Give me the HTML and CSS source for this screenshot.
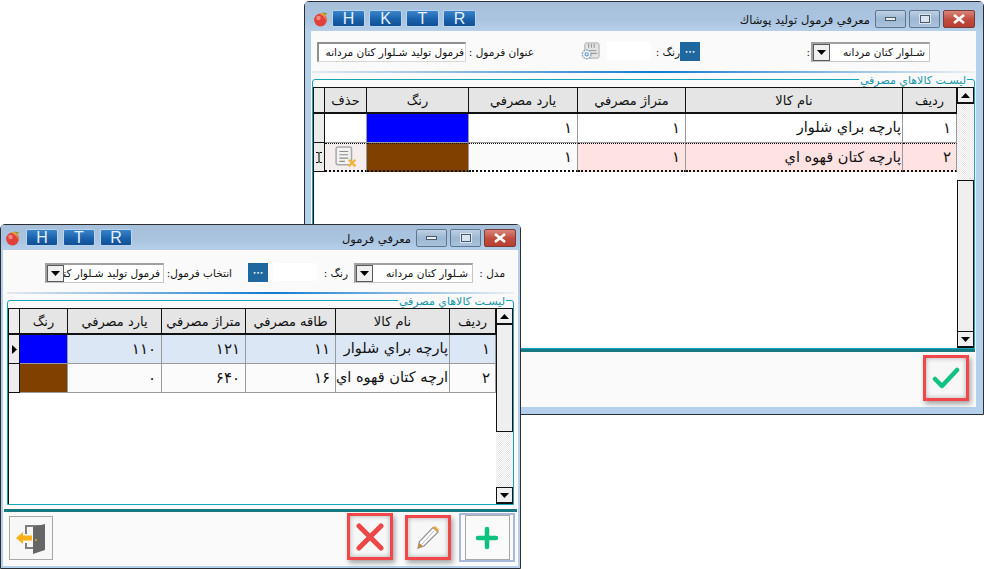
FILE: index.html
```html
<!DOCTYPE html>
<html lang="fa">
<head>
<meta charset="utf-8">
<title>معرفي فرمول</title>
<link rel="stylesheet" href="styles.css">
</head>
<body>
<svg class="defs" width="0" height="0" aria-hidden="true">
  <defs>
    <symbol id="tomato" viewBox="0 0 16 16">
      <circle cx="7.500" cy="9" r="6.400" fill="#e2403a"/>
      <circle cx="5.500" cy="7" r="2.200" fill="#f08a80"/>
      <path d="M6 2.600 C9 1 13 1.400 15 3.600 C13 4.400 11.500 4.400 10.500 4 C13 6 14 8 13.600 10 C12.500 7 10 4.600 6 2.600Z" fill="#e9a13b"/>
      <path d="M9 1.500 L14 2.200 L12 3.400Z" fill="#5d9c45"/>
    </symbol>
    <symbol id="arrow-down" viewBox="0 0 9 5"><path d="M0 0H9L4.500 5Z" fill="#000"/></symbol>
    <symbol id="arrow-up" viewBox="0 0 9 5"><path d="M0 5H9L4.500 0Z" fill="#000"/></symbol>
  </defs>
</svg>

<section class="win win-a">
  <header class="titlebar">
    <svg class="tomato"><use href="#tomato"/></svg>
    <div class="hk"><button class="hk-btn">H</button><button class="hk-btn">K</button><button class="hk-btn">T</button><button class="hk-btn">R</button></div>
    <div class="title">معرفي فرمول توليد پوشاك</div>
    <div class="ctl">
      <span class="cb cb-min"><i></i></span>
      <span class="cb cb-max"><i></i></span>
      <span class="cb cb-close"><svg width="14" height="10" viewBox="0 0 14 10"><path d="M2 1L12 9M12 1L2 9" stroke="#fff" stroke-width="2.600"/></svg></span>
    </div>
  </header>
  <div class="client">
    <div class="form form-a">
      <div class="text-box box-title">فرمول توليد شـلوار كتان مردانه</div>
      <span class="lbl lbl-title">عنوان فرمول :</span>
      <svg class="gear" viewBox="0 0 20 20">
        <rect x="4" y="1" width="15" height="16" rx="2" fill="#e4e4e4" stroke="#a8a8a8"/>
        <path d="M8 2v4M11 2v4M14 2v4M7 9h9M10 12h7" stroke="#9a9a9a" stroke-width="1.200"/>
        <circle cx="6" cy="13" r="4.600" fill="#f4f7fa" stroke="#8fa4b8" stroke-width="1.400" stroke-dasharray="2 .9"/>
        <circle cx="6" cy="13" r="1.700" fill="none" stroke="#5f97c6" stroke-width="1.200"/>
      </svg>
      <div class="blank"></div>
      <span class="lbl lbl-color">رنگ :</span>
      <button class="dots">•••</button>
      <span class="lbl lbl-colon">:</span>
      <div class="combo combo-a"><span class="arrow"><svg width="9" height="5"><use href="#arrow-down"/></svg></span><span class="combo-text">شـلوار كتان مردانه</span></div>
    </div>
    <div class="sep"></div>
    <fieldset class="group group-a">
      <legend>ليسـت كالاهاي مصرفي</legend>
      <div class="grid-wrap">
        <div class="grid cols-a">
          <div class="hd hd-rh"></div><div class="hd">حذف</div><div class="hd">رنگ</div><div class="hd">يارد مصرفي</div><div class="hd">متراژ مصرفي</div><div class="hd">نام كالا</div><div class="hd">رديف</div>
          <div class="rh"></div><div class="c"></div><div class="c blue"></div><div class="c num">۱</div><div class="c num">۱</div><div class="c name">پارچه براي شلوار</div><div class="c num">۱</div>
          <div class="rh sel"><svg width="6" height="11" viewBox="0 0 6 11"><path d="M0 .5h2.200l.8.8.8-.8H6M3 1v9M0 10.500h2.200l.8-.8.8.8H6" stroke="#000" fill="none"/></svg></div>
          <div class="c act del"><svg class="del-ico" viewBox="0 0 20 20"><rect x="1" y="1" width="14" height="16" rx="1.500" fill="#f3f3f3" stroke="#a9a9a9" stroke-width="1.400"/><path d="M4 5h8M4 8h8M4 11h8M4 14h5" stroke="#8d8d8d"/><path d="M12.500 12.500l6 6M18.500 12.500l-6 6" stroke="#f5b335" stroke-width="2"/></svg></div>
          <div class="c act brown"></div><div class="c act white num">۱</div><div class="c act pink num">۱</div><div class="c act pink name">پارچه كتان قهوه اي</div><div class="c act pink num">۲</div>
        </div>
        <div class="sbar sbar-a">
          <span class="sb-arrow"><svg width="9" height="5"><use href="#arrow-up"/></svg></span>
          <span class="sb-track"></span>
          <span class="sb-thumb"></span>
          <span class="sb-arrow"><svg width="9" height="5"><use href="#arrow-down"/></svg></span>
        </div>
      </div>
    </fieldset>
    <div class="teal"></div>
    <footer class="foot foot-a">
      <button class="act-btn red btn-ok"><svg width="28" height="24" viewBox="0 0 28 24"><path d="M3 13l7 7L25 4" fill="none" stroke="#12c281" stroke-width="4.500" stroke-linecap="round" stroke-linejoin="round"/></svg></button>
    </footer>
  </div>
</section>

<section class="win win-b">
  <header class="titlebar">
    <svg class="tomato"><use href="#tomato"/></svg>
    <div class="hk"><button class="hk-btn">H</button><button class="hk-btn">T</button><button class="hk-btn">R</button></div>
    <div class="title">معرفي فرمول</div>
    <div class="ctl">
      <span class="cb cb-min"><i></i></span>
      <span class="cb cb-max"><i></i></span>
      <span class="cb cb-close"><svg width="14" height="10" viewBox="0 0 14 10"><path d="M2 1L12 9M12 1L2 9" stroke="#fff" stroke-width="2.600"/></svg></span>
    </div>
  </header>
  <div class="client">
    <div class="form form-b">
      <div class="combo combo-b"><span class="arrow"><svg width="9" height="5"><use href="#arrow-down"/></svg></span><span class="combo-text clip">فرمول توليد شـلوار كتان مردانه</span></div>
      <span class="lbl lbl-pick">انتخاب فرمول:</span>
      <button class="dots">•••</button>
      <div class="blank"></div>
      <span class="lbl lbl-color-b">رنگ :</span>
      <div class="combo combo-c"><span class="arrow"><svg width="9" height="5"><use href="#arrow-down"/></svg></span><span class="combo-text">شـلوار كتان مردانه</span></div>
      <span class="lbl lbl-model">مدل :</span>
    </div>
    <div class="sep"></div>
    <fieldset class="group group-b">
      <legend>ليسـت كالاهاي مصرفي</legend>
      <div class="grid-wrap">
        <div class="grid cols-b">
          <div class="hd hd-rh"></div><div class="hd">رنگ</div><div class="hd">يارد مصرفي</div><div class="hd">متراژ مصرفي</div><div class="hd">طاقه مصرفي</div><div class="hd">نام كالا</div><div class="hd">رديف</div>
          <div class="rh"><svg width="5" height="9" viewBox="0 0 5 9"><path d="M0 0V9L5 4.500Z" fill="#000"/></svg></div><div class="c blue"></div><div class="c lb num">۱۱۰</div><div class="c lb num">۱۲۱</div><div class="c lb num">۱۱</div><div class="c lb name">پارچه براي شلوار</div><div class="c lb num">۱</div>
          <div class="rh"></div><div class="c brown"></div><div class="c off num">۰</div><div class="c off num">۶۴۰</div><div class="c off num">۱۶</div><div class="c off name">ارچه كتان قهوه اي</div><div class="c off num">۲</div>
        </div>
        <div class="sbar sbar-b">
          <span class="sb-arrow"><svg width="9" height="5"><use href="#arrow-up"/></svg></span>
          <span class="sb-thumb"></span>
          <span class="sb-track"></span>
          <span class="sb-arrow"><svg width="9" height="5"><use href="#arrow-down"/></svg></span>
        </div>
      </div>
    </fieldset>
    <div class="teal"></div>
    <footer class="foot foot-b">
      <button class="act-btn exit">
        <svg width="32" height="34" viewBox="0 0 32 34"><path d="M11 13V5H26V27H11V22" fill="none" stroke="#7d7d7d" stroke-width="2"/><path d="M18 6L30 3V29L18 33Z" fill="#666"/><circle cx="21" cy="19" r="1" fill="#f5a623"/><path d="M1 17l7-6v3.500h9v5H8V23Z" fill="#fbb117"/></svg>
      </button>
      <span class="spacer"></span>
      <button class="act-btn red btn-del"><svg width="28" height="28" viewBox="0 0 28 28"><path d="M3 3L25 25M25 3L3 25" stroke="#ee4747" stroke-width="5" stroke-linecap="round"/></svg></button>
      <button class="act-btn red btn-edit"><svg width="24" height="26" viewBox="0 0 24 26"><path d="M17 2.500L22 7 8 21l-6 2 1.500-6.500Z" fill="#fff" stroke="#8f8f8f" stroke-width="1.200"/><path d="M6 19L18 6" stroke="#b5b5b5"/><path d="M17 2.500l2-1.500 4 4-1 2Z" fill="#f0a428"/><path d="M2 23l1.500-5 3.500 3Z" fill="#c98a2c"/></svg></button>
      <button class="add-btn"><span class="add-inner"><svg width="24" height="24" viewBox="0 0 24 24"><path d="M12 3V21M3 12H21" stroke="#0dc27f" stroke-width="4.500" stroke-linecap="round"/></svg></span></button>
    </footer>
  </div>
</section>
</body>
</html>
```

FILE: styles.css
```css
* { box-sizing: border-box; }
html, body { margin: 0; padding: 0; }
body {
  width: 984px;
  height: 569px;
  overflow: hidden;
  position: relative;
  background: #fff;
  font-family: "DejaVu Sans", "Noto Sans", sans-serif;
  color: #111;
}
.defs { position: absolute; }
button { font-family: inherit; padding: 0; margin: 0; }

.win {
  position: absolute;
  display: flex;
  flex-direction: column;
  background: #b4d0ec;
  border: 1px solid #2b2f33;
  border-radius: 5px 5px 0 0;
}
.win-a { left: 304px; top: 1px; width: 680px; height: 414px; }
.win-b { left: 0; top: 224px; width: 521px; height: 345px; }

.titlebar {
  height: 29px;
  flex: none;
  display: flex;
  align-items: flex-start;
  background: linear-gradient(180deg, #a7bfd9 0%, #aac4e0 60%, #b6d0ea 100%);
  padding: 8px 8px 0 8px;
}
.win-b .titlebar { height: 25px; padding: 4px 4px 0 4px; }
.tomato { width: 16px; height: 16px; margin-top: 1px; flex: none; }
.hk { display: flex; gap: 4px; margin-left: 3px; }
.win-b .hk { margin-left: 5px; gap: 5px; }
.hk-btn {
  width: 33px;
  height: 17px;
  border: 1px solid #b9d4ee;
  border-radius: 2px;
  background: linear-gradient(180deg, #3b83c8 0%, #1a62ad 55%, #124f92 100%);
  color: #e8f2fc;
  font: 16px/15px "Liberation Sans", sans-serif;
}
.win-b .hk-btn { width: 32px; }
.title { margin: 1px 0 0 auto; font-size: 11.500px; line-height: 19px; color: #111; direction: rtl; }
.ctl { display: flex; gap: 3px; margin-left: 5px; }
.cb {
  width: 31px;
  height: 18px;
  display: flex;
  align-items: center;
  justify-content: center;
  border: 1px solid #5e7690;
  border-radius: 2px;
  background: linear-gradient(180deg, #bdd0e4 0%, #9db7d2 50%, #a9c3dc 100%);
}
.cb-close { background: linear-gradient(180deg, #d9857a 0%, #c14b3e 55%, #b93e32 100%); border-color: #7a3a36; width: 32px; }
.cb-min i { width: 11px; height: 4px; background: #e9eef3; border: 1px solid #48596b; }
.cb-max i { width: 10px; height: 8px; background: #dbe5ef; border: 1px solid #48596b; outline: 1px solid #dbe5ef; }

.client {
  flex: 1;
  display: flex;
  flex-direction: column;
  background: #fafafa;
  margin: 0 7px 7px 6px;
  min-height: 0;
}
.win-b .client { margin: 0 2px 2px 2px; }

.form {
  height: 40px;
  flex: none;
  display: flex;
  align-items: flex-start;
  padding-top: 11px;
  line-height: 20px;
}
.form-b { height: 42px; padding-top: 13px; }
.lbl { direction: rtl; white-space: nowrap; font-size: 10.500px; }
.text-box {
  direction: rtl;
  background: #fff;
  border: 1px solid #d8d8d8;
  border-top: 2px solid #8f8f8f;
  border-left: 2px solid #8f8f8f;
  height: 20px;
  font-size: 10.500px;
  line-height: 16px;
  padding-right: 1px;
  white-space: nowrap;
  overflow: hidden;
}
.box-title { width: 149px; margin-left: 6px; }
.lbl-title { margin-left: 4px; width: 64px; }
.gear { width: 19px; height: 19px; margin-left: 47px; flex: none; }
.blank { width: 44px; height: 18px; background: #fff; flex: none; margin-left: 7px; }
.lbl-color { margin-left: 3px; width: 26px; }
.dots {
  width: 20px;
  height: 19px;
  border: none;
  background: #1f679f;
  color: #fff;
  font-size: 6px;
  line-height: 19px;
  flex: none;
}
.lbl-colon { margin-left: 107px; width: 3px; }
.combo {
  display: flex;
  height: 20px;
  width: 119px;
  background: #fff;
  border: 1px solid #c6c6c6;
  border-top: 2px solid #a0a0a0;
  border-left: 2px solid #a0a0a0;
  flex: none;
}
.combo-a { margin-left: 1px; }
.arrow {
  width: 17px;
  height: 17px;
  flex: none;
  display: flex;
  align-items: center;
  justify-content: center;
  border: 1px solid #5a5a5a;
  background: #f0f0f0;
}
.combo-text {
  flex: 1;
  direction: rtl;
  white-space: nowrap;
  overflow: hidden;
  font-size: 10.500px;
  line-height: 16px;
  padding-right: 4px;
}
.combo-text.clip { padding-right: 3px; }

.combo-b { margin-left: 42px; }
.lbl-pick { margin-left: 5px; width: 63px; }
.form-b .dots { margin-left: 16px; }
.form-b .blank { margin-left: 5px; }
.lbl-color-b { margin-left: 6px; width: 25px; }
.combo-c { margin-left: 6px; }
.lbl-model { margin-left: 5px; width: 27px; }

.sep {
  height: 2px;
  flex: none;
  margin: 0 1px;
  background: linear-gradient(90deg, #e6eaee 0%, #0f7ad0 52%, #eef0f2 100%);
}
.win-b .sep { margin: 0 4px 0 4px; }

.group {
  flex: none;
  margin: 0 1px;
  padding: 0;
  border: 1px solid #12a4b8;
  border-radius: 3px 3px 0 0;
  min-width: 0;
  display: block;
}
.group legend {
  direction: rtl;
  margin-left: auto;
  margin-right: 7px;
  padding: 0 1px;
  height: 12px;
  font-size: 11px;
  line-height: 16px;
  color: #1797ab;
  white-space: nowrap;
}
.group-a { height: 276px; }
.group-b { height: 211px; margin: 0 4px; }
.grid-wrap { display: flex; margin-top: 2px; }
.group-a .grid-wrap { height: 261px; }
.group-b .grid-wrap { height: 196px; }

.grid { display: grid; align-content: start; flex: 1; background: #fff; border-left: 1px solid #111; }
.cols-a { grid-template-columns: 11px 42px 102px 109px 108px 217px 54px; grid-template-rows: 27px 29px 29px; }
.cols-b { grid-template-columns: 11px 48px 94px 84px 90px 114px 46px; grid-template-rows: 27px 29px 29px; }

.hd {
  background: #e5e5e5;
  border: 1px solid #111;
  border-width: 1px 1px 2px 0;
  font-size: 13px;
  line-height: 25px;
  text-align: center;
  direction: rtl;
  white-space: nowrap;
  overflow: hidden;
}
.hd-rh { background: #ececec; }
.c {
  border-right: 1px solid #9a9a9a;
  border-bottom: 1px solid #9a9a9a;
  background: #fff;
  direction: rtl;
  white-space: nowrap;
  overflow: hidden;
}
.num { font-size: 15px; line-height: 28px; text-align: right; padding-right: 5px; }
.name { font-size: 14.500px; line-height: 27px; padding-right: 1px; }
.blue { background: #0000ff; }
.brown { background: #804000; }
.pink { background: #ffe2e2; }
.white { background: #fafafa; }
.del { background: #f5eeee; display: flex; align-items: center; justify-content: center; }
.del-ico { width: 22px; height: 22px; }
.act { border-top: 1px dotted #111; border-bottom: 2px dotted #111; }
.act.num, .act.name { line-height: 26px; }
.rh {
  background: #ececec;
  border: 1px solid #111;
  border-width: 0 1px 1px 0;
  display: flex;
  align-items: center;
  justify-content: center;
}
.lb { background: #dce7f5; }
.off { background: #fbfbfb; }

.sbar { width: 17px; flex: none; display: flex; flex-direction: column; }
.sb-arrow {
  height: 17px;
  flex: none;
  display: flex;
  align-items: center;
  justify-content: center;
  background: #f0f0f0;
  border: 1px solid #111;
  border-width: 1px 1px 2px 1px;
}
.sb-track {
  background-color: #fdfdfd;
  background-image: conic-gradient(#e6e6e6 25%, #fdfdfd 0 50%, #e6e6e6 0 75%, #fdfdfd 0);
  background-size: 2px 2px;
}
.sb-thumb { background: #efefef; border: 1px solid #111; }
.sbar-a .sb-track { height: 76px; }
.sbar-a .sb-thumb { flex: 1; border-bottom: none; }
.sbar-b .sb-thumb { height: 107px; border-top: none; }
.sbar-b .sb-track { flex: 1; }

.teal { height: 3px; flex: none; background: #167a80; margin: 0 1px; }
.win-b .teal { margin-top: 4px; }
.foot { flex: 1; display: flex; align-items: flex-start; min-height: 0; background: #fafafa; }
.foot-a { justify-content: flex-end; padding: 3px 7px 0 0; }
.foot-b { padding: 0 3px 0 6px; }
.spacer { flex: 1; }
.act-btn {
  background: #f7f7f7;
  display: flex;
  align-items: center;
  justify-content: center;
  border: 1px solid #a8a8a8;
  flex: none;
}
.red { border: 3px solid #f2474a; box-shadow: 2px 3px 5px rgba(0,0,0,.35), inset 0 0 5px rgba(0,0,0,.3); }
.btn-ok { width: 46px; height: 46px; }
.exit { width: 44px; height: 44px; margin-top: 4px; }
.btn-del { width: 46px; height: 47px; margin-top: 1px; }
.btn-edit { width: 46px; height: 45px; margin: 3px 0 0 12px; }
.add-btn {
  width: 56px;
  height: 49px;
  margin: 1px 0 0 8px;
  display: flex;
  align-items: center;
  justify-content: center;
  background: #fafafa;
  border: 2px solid #a9b9dc;
  flex: none;
}
.add-inner {
  width: 45px;
  height: 45px;
  display: flex;
  align-items: center;
  justify-content: center;
  border: 1px solid #a8a8a8;
}
```
